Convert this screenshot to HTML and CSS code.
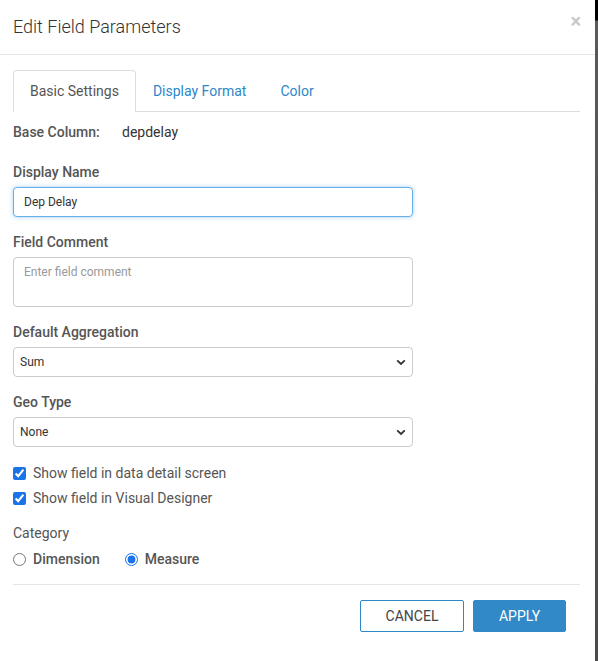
FILE: index.html
```html
<!DOCTYPE html>
<html>
<head>
<meta charset="utf-8">
<link rel="stylesheet" href="styles.css">
</head>
<body>
<div class="page">
  <div class="modal">
    <div class="header">
      <div class="title">Edit Field Parameters</div>
      <span class="close">&times;</span>
    </div>
    <div class="body">
      <div class="tabs">
        <div class="tab active">Basic Settings</div>
        <div class="tab">Display Format</div>
        <div class="tab">Color</div>
      </div>
      <div class="base-row">
        <span class="base-label">Base Column:</span>
        <span class="base-value">depdelay</span>
      </div>
      <div class="group first">
        <div class="label">Display Name</div>
        <input class="control focused" type="text" value="Dep Delay">
      </div>
      <div class="group">
        <div class="label">Field Comment</div>
        <textarea class="control area" placeholder="Enter field comment"></textarea>
      </div>
      <div class="group">
        <div class="label">Default Aggregation</div>
        <div class="select-wrap">
          <select class="control select"><option>Sum</option></select>
          <svg class="chev" width="10" height="7" viewBox="0 0 10 7"><path d="M1.2 1.3 L5 5 L8.8 1.3" fill="none" stroke="#333" stroke-width="1.8"/></svg>
        </div>
      </div>
      <div class="group">
        <div class="label">Geo Type</div>
        <div class="select-wrap">
          <select class="control select"><option>None</option></select>
          <svg class="chev" width="10" height="7" viewBox="0 0 10 7"><path d="M1.2 1.3 L5 5 L8.8 1.3" fill="none" stroke="#333" stroke-width="1.8"/></svg>
        </div>
      </div>
      <div class="checks">
        <label class="check"><input type="checkbox" checked><span>Show field in data detail screen</span></label>
        <label class="check"><input type="checkbox" checked><span>Show field in Visual Designer</span></label>
      </div>
      <div class="label cat">Category</div>
      <div class="radios">
        <label class="radio"><input type="radio" name="cat"><span>Dimension</span></label>
        <label class="radio"><input type="radio" name="cat" checked><span>Measure</span></label>
      </div>
      <div class="footer">
        <button class="btn cancel">CANCEL</button>
        <button class="btn apply">APPLY</button>
      </div>
    </div>
  </div>
  <div class="edge"></div>
</div>
</body>
</html>
```
FILE: styles.css
```css
html, body {
  margin: 0;
  padding: 0;
  background: #fff;
}
body {
  font-family: Roboto, "Liberation Sans", sans-serif;
  color: #333;
}
.page {
  display: flex;
  width: 598px;
  height: 661px;
  overflow: hidden;
}
.modal {
  width: 595px;
  flex: none;
  background: #fff;
}
.edge {
  flex: 1;
  background: linear-gradient(to bottom, #000 0, #000 20px, #5a5a5a 21px, #4a4a4a 100%);
}
.header {
  height: 55px;
  box-sizing: border-box;
  border-bottom: 1px solid #e5e5e5;
  display: flex;
  justify-content: space-between;
  align-items: flex-start;
  padding: 0 0 0 13px;
}
.title {
  font-size: 18px;
  font-weight: 300;
  color: #333;
  line-height: 20px;
  margin-top: 17px;
}
.close {
  font-size: 20px;
  font-weight: 700;
  color: #c8c8c8;
  line-height: 20px;
  margin-top: 11px;
  margin-right: 14px;
}
.body {
  padding: 15px 15px 0 13px;
}
.tabs {
  display: flex;
  height: 41px;
  border-bottom: 1px solid #ddd;
}
.tab {
  font-size: 14px;
  color: #2d87c8;
  padding: 0 16px;
  line-height: 41px;
  border: 1px solid transparent;
  border-bottom: none;
  border-radius: 4px 4px 0 0;
}
.tab.active {
  color: #555;
  border-color: #ddd;
  background: #fff;
  margin-bottom: -1px;
}
.base-row {
  margin-top: 10px;
  line-height: 20px;
  font-size: 14px;
  display: flex;
}
.base-label {
  font-weight: 500;
  color: #555;
  width: 109px;
}
.base-value {
  color: #333;
}
.group {
  margin-top: 15px;
}
.group.first {
  margin-top: 20px;
}
.label {
  font-size: 14px;
  font-weight: 500;
  color: #555;
  line-height: 20px;
  margin-bottom: 5px;
}
.control {
  display: block;
  box-sizing: border-box;
  width: 400px;
  height: 30px;
  border: 1px solid #ccc;
  border-radius: 4px;
  font-family: Roboto, "Liberation Sans", sans-serif;
  font-size: 12px;
  color: #333;
  padding: 0 10px;
  margin: 0;
  background: #fff;
  outline: none;
}
.control.focused {
  border-color: #66afe9;
  box-shadow: 0 0 4px rgba(102, 175, 233, 0.6);
}
.area {
  height: 50px;
  padding: 7px 10px;
  resize: none;
}
.area::placeholder {
  color: #999;
}
.select-wrap {
  position: relative;
  width: 400px;
}
.select {
  appearance: none;
  -webkit-appearance: none;
  padding: 0 6px;
}
.chev {
  position: absolute;
  right: 7px;
  top: 12px;
}
.checks {
  margin-top: 16px;
  display: flex;
  flex-direction: column;
  gap: 5px;
}
.check, .radio {
  display: flex;
  align-items: center;
  font-size: 14px;
  line-height: 20px;
  color: #555;
}
.check input, .radio input {
  width: 13px;
  height: 13px;
  margin: 0 7px 0 0;
  accent-color: #1a73e8;
}
.label.cat {
  margin-top: 15px;
  margin-bottom: 6px;
  font-weight: 400;
}
.radios {
  display: flex;
  gap: 25px;
}
.radio span {
  font-weight: 500;
}
.footer {
  margin-top: 15px;
  border-top: 1px solid #e5e5e5;
  padding: 15px 14px 0 0;
  display: flex;
  justify-content: flex-end;
  gap: 9px;
}
.btn {
  height: 32px;
  box-sizing: border-box;
  border-radius: 2px;
  font-family: Roboto, "Liberation Sans", sans-serif;
  font-size: 14px;
  padding: 0;
}
.cancel {
  width: 104px;
  background: #fff;
  border: 1px solid #2d87c8;
  color: #444;
}
.apply {
  width: 93px;
  background: #3289c7;
  border: 1px solid #3289c7;
  color: #fff;
}
```
